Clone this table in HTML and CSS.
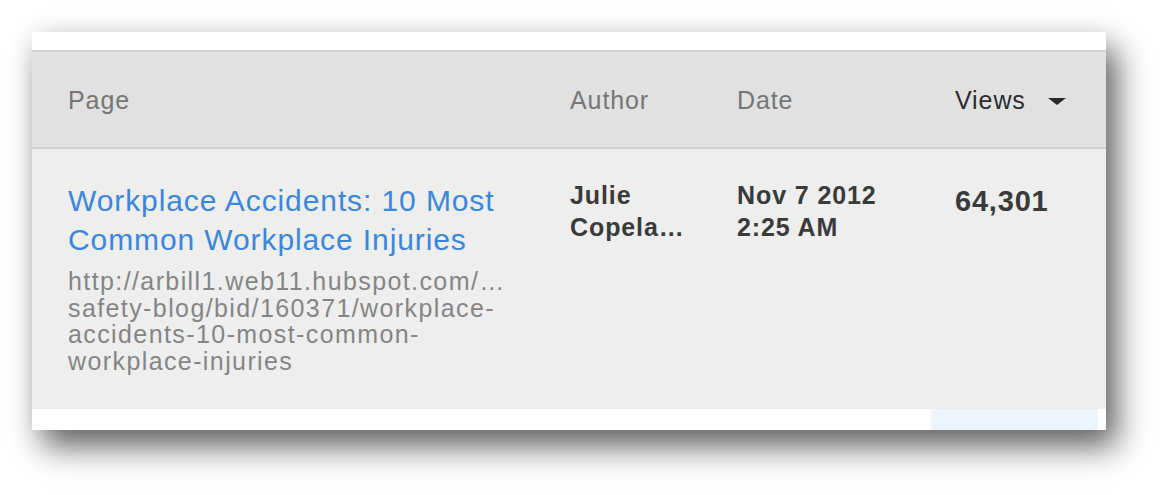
FILE: index.html
```html
<!DOCTYPE html>
<html>
<head>
<meta charset="utf-8">
<link rel="stylesheet" href="styles.css">
</head>
<body>
<div class="card">
  <div class="top-strip"></div>
  <div class="table">
    <div class="row head">
      <div class="cell c-page">Page</div>
      <div class="cell c-author">Author</div>
      <div class="cell c-date">Date</div>
      <div class="cell c-views active">Views <span class="caret"></span></div>
    </div>
    <div class="row body">
      <div class="cell c-page">
        <a class="title" href="#">Workplace Accidents: 10 Most Common Workplace Injuries</a>
        <div class="url">http://arbill1.web11.hubspot.com/…<br>safety-blog/bid/160371/workplace-<br>accidents-10-most-common-<br>workplace-injuries</div>
      </div>
      <div class="cell c-author strong">Julie<br>Copela…</div>
      <div class="cell c-date strong">Nov 7 2012<br>2:25 AM</div>
      <div class="cell c-views num">64,301</div>
    </div>
  </div>
  <div class="bottom-strip"><div class="hl"></div></div>
</div>
</body>
</html>
```

FILE: styles.css
```css
html, body {
  margin: 0;
  padding: 0;
  background: #ffffff;
}
body {
  padding: 32px 0 0 32px;
  min-height: 495px;
  box-sizing: border-box;
  font-family: "Liberation Sans", Arial, sans-serif;
}
.card {
  width: 1074px;
  background: #ffffff;
  box-shadow: 11px 17px 30px rgba(0, 0, 0, 0.6), 0 0 24px rgba(0, 0, 0, 0.07);
}
.top-strip {
  height: 18px;
  background: #ffffff;
}
.row {
  display: grid;
  grid-template-columns: 538px 167px 218px 1fr;
}
.cell {
  box-sizing: border-box;
}
.c-page {
  padding-left: 36px;
  padding-right: 20px;
}
.head {
  height: 99px;
  align-items: center;
  background: #e1e1e1;
  border-top: 2px solid #d2d2d2;
  border-bottom: 2px solid #d2d2d2;
  box-sizing: border-box;
  font-size: 25px;
  letter-spacing: 0.9px;
  color: #767676;
}
.head .cell {
  padding-top: 1px;
}
.head .active {
  color: #2c2c2c;
  display: flex;
  align-items: center;
}
.caret {
  display: inline-block;
  width: 0;
  height: 0;
  margin-left: 22px;
  border-left: 9px solid transparent;
  border-right: 9px solid transparent;
  border-top: 7px solid #2a2a2a;
  margin-top: 2px;
}
.body {
  background: #eeeeee;
  height: 260px;
}
.body .cell {
  padding-top: 32px;
}
.body .strong {
  padding-top: 30px;
}
.title {
  display: block;
  color: #3a86e0;
  text-decoration: none;
  font-size: 30px;
  letter-spacing: 0.9px;
  line-height: 39px;
}
.url {
  margin-top: 9px;
  color: #858585;
  font-size: 25px;
  letter-spacing: 1.4px;
  line-height: 26.5px;
}
.strong {
  color: #3a3a3a;
  font-weight: bold;
  font-size: 25px;
  letter-spacing: 0.9px;
  line-height: 32px;
}
.num {
  color: #3a3a3a;
  font-weight: bold;
  font-size: 29px;
  letter-spacing: 0.8px;
  line-height: 40px;
}
.bottom-strip {
  height: 21px;
  background: #ffffff;
  display: flex;
  justify-content: flex-end;
}
.hl {
  width: 167px;
  margin-right: 8px;
  background: #eef5fd;
}
```
